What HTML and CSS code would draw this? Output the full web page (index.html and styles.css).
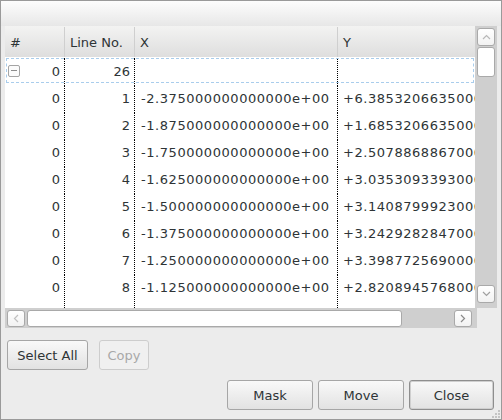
FILE: index.html
```html
<!DOCTYPE html>
<html>
<head>
<meta charset="utf-8">
<link rel="stylesheet" href="styles.css">
</head>
<body>
<div class="window">
  <div class="topstrip"></div>
  <div class="table-area">
    <div class="upper">
      <div class="viewport">
        <div class="row header">
          <div class="c c1">#</div>
          <div class="c c2">Line No.</div>
          <div class="c c3">X</div>
          <div class="c c4">Y</div>
        </div>
        <div class="row data focus">
          <div class="c c1 num"><span class="expander"></span>0</div>
          <div class="c c2 num">26</div>
          <div class="c c3"></div>
          <div class="c c4"></div>
        </div>
        <div class="row data"><div class="c c1 num">0</div><div class="c c2 num">1</div><div class="c c3">-2.375000000000000e+00</div><div class="c c4">+6.385320663500000e+00</div></div>
        <div class="row data"><div class="c c1 num">0</div><div class="c c2 num">2</div><div class="c c3">-1.875000000000000e+00</div><div class="c c4">+1.685320663500000e+00</div></div>
        <div class="row data"><div class="c c1 num">0</div><div class="c c2 num">3</div><div class="c c3">-1.750000000000000e+00</div><div class="c c4">+2.507886886700000e+00</div></div>
        <div class="row data"><div class="c c1 num">0</div><div class="c c2 num">4</div><div class="c c3">-1.625000000000000e+00</div><div class="c c4">+3.035309339300000e+00</div></div>
        <div class="row data"><div class="c c1 num">0</div><div class="c c2 num">5</div><div class="c c3">-1.500000000000000e+00</div><div class="c c4">+3.140879992300000e+00</div></div>
        <div class="row data"><div class="c c1 num">0</div><div class="c c2 num">6</div><div class="c c3">-1.375000000000000e+00</div><div class="c c4">+3.242928284700000e+00</div></div>
        <div class="row data"><div class="c c1 num">0</div><div class="c c2 num">7</div><div class="c c3">-1.250000000000000e+00</div><div class="c c4">+3.398772569000000e+00</div></div>
        <div class="row data"><div class="c c1 num">0</div><div class="c c2 num">8</div><div class="c c3">-1.125000000000000e+00</div><div class="c c4">+2.820894576800000e+00</div></div>
        <div class="row data filler"><div class="c c1"></div><div class="c c2"></div><div class="c c3"></div><div class="c c4"></div></div>
      </div>
      <div class="vscroll">
        <div class="sbtn vbtn up"><svg width="9" height="6" viewBox="0 0 9 6"><polyline points="1,5 4.5,1.5 8,5" fill="none" stroke="#b8b8b8" stroke-width="1.2"/></svg></div>
        <div class="vthumb"></div>
        <div class="vspace"></div>
        <div class="sbtn vbtn down"><svg width="9" height="6" viewBox="0 0 9 6"><polyline points="1,1 4.5,4.5 8,1" fill="none" stroke="#a0a0a0" stroke-width="1.2"/></svg></div>
      </div>
    </div>
    <div class="hscroll">
      <div class="sbtn hbtn"><svg width="6" height="9" viewBox="0 0 6 9"><polyline points="5,1 1.5,4.5 5,8" fill="none" stroke="#c0c0c0" stroke-width="1.2"/></svg></div>
      <div class="hthumb"></div>
      <div class="hspace"></div>
      <div class="sbtn hbtn"><svg width="6" height="9" viewBox="0 0 6 9"><polyline points="1,1 4.5,4.5 1,8" fill="none" stroke="#8a8a8a" stroke-width="1.2"/></svg></div>
    </div>
  </div>
  <div class="actions">
    <button class="btn select-all">Select All</button>
    <button class="btn copy" disabled>Copy</button>
  </div>
  <div class="footer">
    <button class="btn mask">Mask</button>
    <button class="btn move">Move</button>
    <button class="btn close">Close</button>
  </div>
  <svg class="grip" width="8" height="8" viewBox="0 0 8 8">
    <rect x="6" y="0" width="2" height="2" fill="#c4c4c4"/>
    <rect x="3" y="3" width="2" height="2" fill="#c4c4c4"/>
    <rect x="6" y="3" width="2" height="2" fill="#c4c4c4"/>
    <rect x="0" y="6" width="2" height="2" fill="#c4c4c4"/>
    <rect x="3" y="6" width="2" height="2" fill="#c4c4c4"/>
    <rect x="6" y="6" width="2" height="2" fill="#c4c4c4"/>
  </svg>
</div>
</body>
</html>
```
FILE: styles.css
```css
* { box-sizing: border-box; }
html, body { margin: 0; padding: 0; }
body {
  font-family: "DejaVu Sans", sans-serif;
  font-size: 13px;
  color: #2e3436;
  background: #ededed;
}
.window {
  position: relative;
  width: 502px;
  height: 420px;
  border: 1px solid #9a9a9a;
  background: #ececec;
  display: flex;
  flex-direction: column;
}
.topstrip {
  height: 25px;
  background: linear-gradient(#fdfdfd, #e7e7e7);
}
.table-area {
  margin: 0 4px;
  display: flex;
  flex-direction: column;
}
.upper {
  display: flex;
  height: 282px;
}
.viewport {
  width: 470px;
  height: 282px;
  background: #fff;
  overflow: hidden;
  display: flex;
  flex-direction: column;
}
.row {
  display: flex;
  flex: none;
  width: 470px;
  height: 27px;
  overflow: hidden;
}
.row.header {
  height: 31px;
  padding-top: 1px;
  background: linear-gradient(#f3f3f2, #dedede);
}
.row.header .c {
  border-right: 1px solid #cfcfcf;
}
.c {
  flex: none;
  display: flex;
  align-items: center;
  white-space: nowrap;
  padding-left: 5px;
}
.row.data { padding-top: 1px; }
.row.data .c3, .row.data .c4 {
  letter-spacing: 0.55px;
  padding-left: 6px;
}
.row.data .c4 { padding-left: 5px; }
.c1 { width: 60px; }
.c2 { width: 70px; }
.c3 { width: 203px; }
.c4 { width: 220px; overflow: hidden; }
.row.header .c4 { width: 137px; border-right: none; }
.row.data .c1, .row.data .c2, .row.data .c3 {
  border-right: 1px dotted #000;
}
.c.num {
  justify-content: flex-end;
  padding-right: 4px;
}
.row.filler { height: 8px; }
.focus {
  outline: 1px dashed #a9cdec;
  outline-offset: -2px;
}
.expander {
  width: 12px;
  height: 12px;
  border: 1px solid #a4a4a4;
  border-radius: 2px;
  margin-right: auto;
  margin-left: 3px;
  position: relative;
  background: #fbfbfb;
}
.expander::after {
  content: "";
  position: absolute;
  left: 2px;
  right: 2px;
  top: 4px;
  height: 1px;
  background: #8c8c8c;
}
.c1.num { padding-left: 0; }
.vscroll {
  width: 22px;
  background: #cfcfcf;
  display: flex;
  flex-direction: column;
  align-items: center;
  padding: 2px 0 5px;
}
.sbtn {
  display: flex;
  align-items: center;
  justify-content: center;
  background: linear-gradient(#ffffff, #f2f2f2);
  border: 1px solid #a9a9a9;
  border-radius: 3px;
}
.vbtn { width: 18px; height: 18px; }
.vthumb {
  margin-top: 1px;
  width: 18px;
  height: 30px;
  background: #fff;
  border: 1px solid #a9a9a9;
  border-radius: 3px;
}
.vspace { flex: 1; }
.hscroll {
  width: 472px;
  height: 20px;
  background: #cfcfcf;
  display: flex;
  align-items: center;
  padding: 0 5px 0 2px;
  gap: 2px;
}
.hbtn { width: 18px; height: 17px; }
.hthumb {
  width: 375px;
  height: 17px;
  background: #fff;
  border: 1px solid #a9a9a9;
  border-radius: 3px;
}
.hspace { flex: 1; }
.actions {
  display: flex;
  gap: 11px;
  margin: 12px 0 0 6px;
  height: 30px;
}
.footer {
  display: flex;
  justify-content: flex-end;
  gap: 5px;
  margin: 10px 7px 0 0;
  height: 30px;
}
.btn {
  font-family: "DejaVu Sans", sans-serif;
  font-size: 13px;
  color: #2e3436;
  height: 30px;
  padding: 0;
  border: 1px solid #a6a6a6;
  border-radius: 3px;
  background: linear-gradient(#f9f9f9, #e2e2e2);
}
.select-all { width: 81px; }
.copy {
  width: 50px;
  color: #a8a8a8;
  border-color: #cdcdcd;
  background: #f0f0f0;
}
.mask, .move { width: 86px; }
.close {
  width: 85px;
  border-color: #8e8e8e;
  box-shadow: inset 0 0 0 1px #cfcfcf;
}
.grip {
  position: absolute;
  right: 1px;
  bottom: 1px;
}
```
